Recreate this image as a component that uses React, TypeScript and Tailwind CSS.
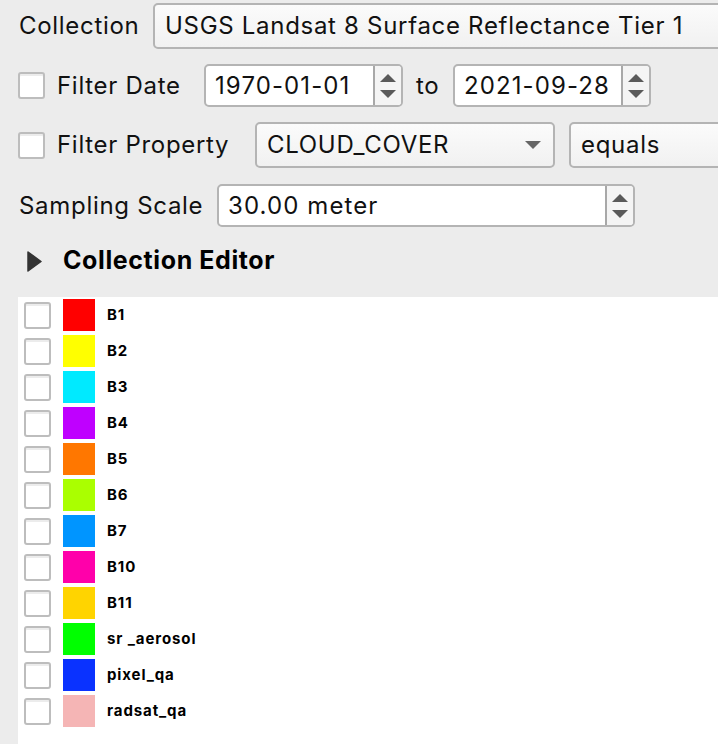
import React from "react";

const bands: { name: string; color: string }[] = [
  { name: "B1", color: "#ff0000" },
  { name: "B2", color: "#ffff00" },
  { name: "B3", color: "#00eaff" },
  { name: "B4", color: "#bf00ff" },
  { name: "B5", color: "#ff7700" },
  { name: "B6", color: "#aaff00" },
  { name: "B7", color: "#0095ff" },
  { name: "B10", color: "#ff00aa" },
  { name: "B11", color: "#ffd400" },
  { name: "sr _aerosol", color: "#00ff00" },
  { name: "pixel_qa", color: "#0a32ff" },
  { name: "radsat_qa", color: "#f5b5b5" },
];

function CheckBox() {
  return (
    <div className="w-[27px] h-[27px] shrink-0 rounded-[3px] border-2 border-[#bdbdbd] bg-white shadow-[inset_0_2px_0_#ececec]" />
  );
}

function SpinArrows() {
  return (
    <svg width="18" height="26" viewBox="0 0 18 26">
      <polygon points="1,9 9,1 17,9" fill="#5a5a5a" />
      <polygon points="1,17 17,17 9,25" fill="#5a5a5a" />
    </svg>
  );
}

function SpinBox({ value, width }: { value: string; width: string }) {
  return (
    <div className={`${width} h-[43px] shrink-0 flex rounded-[5px] border-2 border-[#b4b4b4] bg-white overflow-hidden`}>
      <div className="flex-1 flex items-center pl-[9px] text-[24px] tracking-[1.1px] text-[#111] whitespace-nowrap">{value}</div>
      <div className="w-[28px] border-l-2 border-[#a8a8a8] bg-[#f4f4f4] flex items-center justify-center">
        <SpinArrows />
      </div>
    </div>
  );
}

function Combo({ value, width, arrow }: { value: string; width: string; arrow?: boolean }) {
  return (
    <div
      className={`${width} h-[46px] shrink-0 flex items-center rounded-[5px] border-2 border-[#b4b4b4] bg-gradient-to-b from-[#fbfbfb] to-[#f1f1f1] pl-[10px] text-[24px] tracking-[0.7px] text-[#111]`}
    >
      <span className="flex-1 whitespace-nowrap">{value}</span>
      {arrow && (
        <svg width="16" height="8" viewBox="0 0 16 8" className="mr-[12px]">
          <polygon points="0,0 16,0 8,8" fill="#666" />
        </svg>
      )}
    </div>
  );
}

export default function App() {
  return (
    <div
      className="w-[718px] h-[744px] bg-[#ececec] overflow-hidden flex flex-col text-[#111]"
      style={{ fontFamily: "Inter, 'Liberation Sans', sans-serif" }}
    >
      {/* Row 1 */}
      <div className="mt-[3px] h-[46px] flex items-center pl-[19px]">
        <div className="w-[134px] shrink-0 text-[24px] tracking-[0.7px] whitespace-nowrap">Collection</div>
        <Combo value="USGS Landsat 8 Surface Reflectance Tier 1" width="w-[620px]" />
      </div>

      {/* Row 2 */}
      <div className="mt-[15px] h-[43px] flex items-center pl-[18px]">
        <CheckBox />
        <div className="ml-[12px] w-[147px] shrink-0 text-[24px] tracking-[0.7px] whitespace-nowrap">Filter Date</div>
        <SpinBox value="1970-01-01" width="w-[199px]" />
        <div className="ml-[13px] w-[37px] shrink-0 text-[24px] tracking-[0.7px]">to</div>
        <SpinBox value="2021-09-28" width="w-[198px]" />
      </div>

      {/* Row 3 */}
      <div className="mt-[15px] h-[46px] flex items-center pl-[18px]">
        <CheckBox />
        <div className="ml-[12px] w-[198px] shrink-0 text-[24px] tracking-[0.7px] whitespace-nowrap">Filter Property</div>
        <Combo value="CLOUD_COVER" width="w-[300px]" arrow />
        <div className="ml-[14px] shrink-0">
          <Combo value="equals" width="w-[200px]" />
        </div>
      </div>

      {/* Row 4 */}
      <div className="mt-[16px] h-[43px] flex items-center pl-[19px]">
        <div className="w-[198px] shrink-0 text-[24px] tracking-[0.7px] whitespace-nowrap">Sampling Scale</div>
        <SpinBox value="30.00 meter" width="w-[418px]" />
      </div>

      {/* Row 5 */}
      <div className="mt-[22px] h-[24px] flex items-center pl-[27px]">
        <svg width="15" height="21" viewBox="0 0 15 21">
          <polygon points="1,1 14,10.5 1,20" fill="#333" stroke="#333" strokeWidth="1.5" strokeLinejoin="round" />
        </svg>
        <div className="ml-[21px] text-[25px] font-bold tracking-[0.6px] text-black whitespace-nowrap">Collection Editor</div>
      </div>

      {/* List */}
      <div className="mt-[24px] ml-[18px] flex-1 bg-white">
        {bands.map((b) => (
          <div key={b.name} className="h-[36px] flex items-center pl-[6px]">
            <CheckBox />
            <div className="ml-[12px] w-[32px] h-[32px] shrink-0" style={{ backgroundColor: b.color }} />
            <div className="ml-[12px] text-[15px] font-bold tracking-[0.9px] text-black whitespace-nowrap">{b.name}</div>
          </div>
        ))}
      </div>
    </div>
  );
}
